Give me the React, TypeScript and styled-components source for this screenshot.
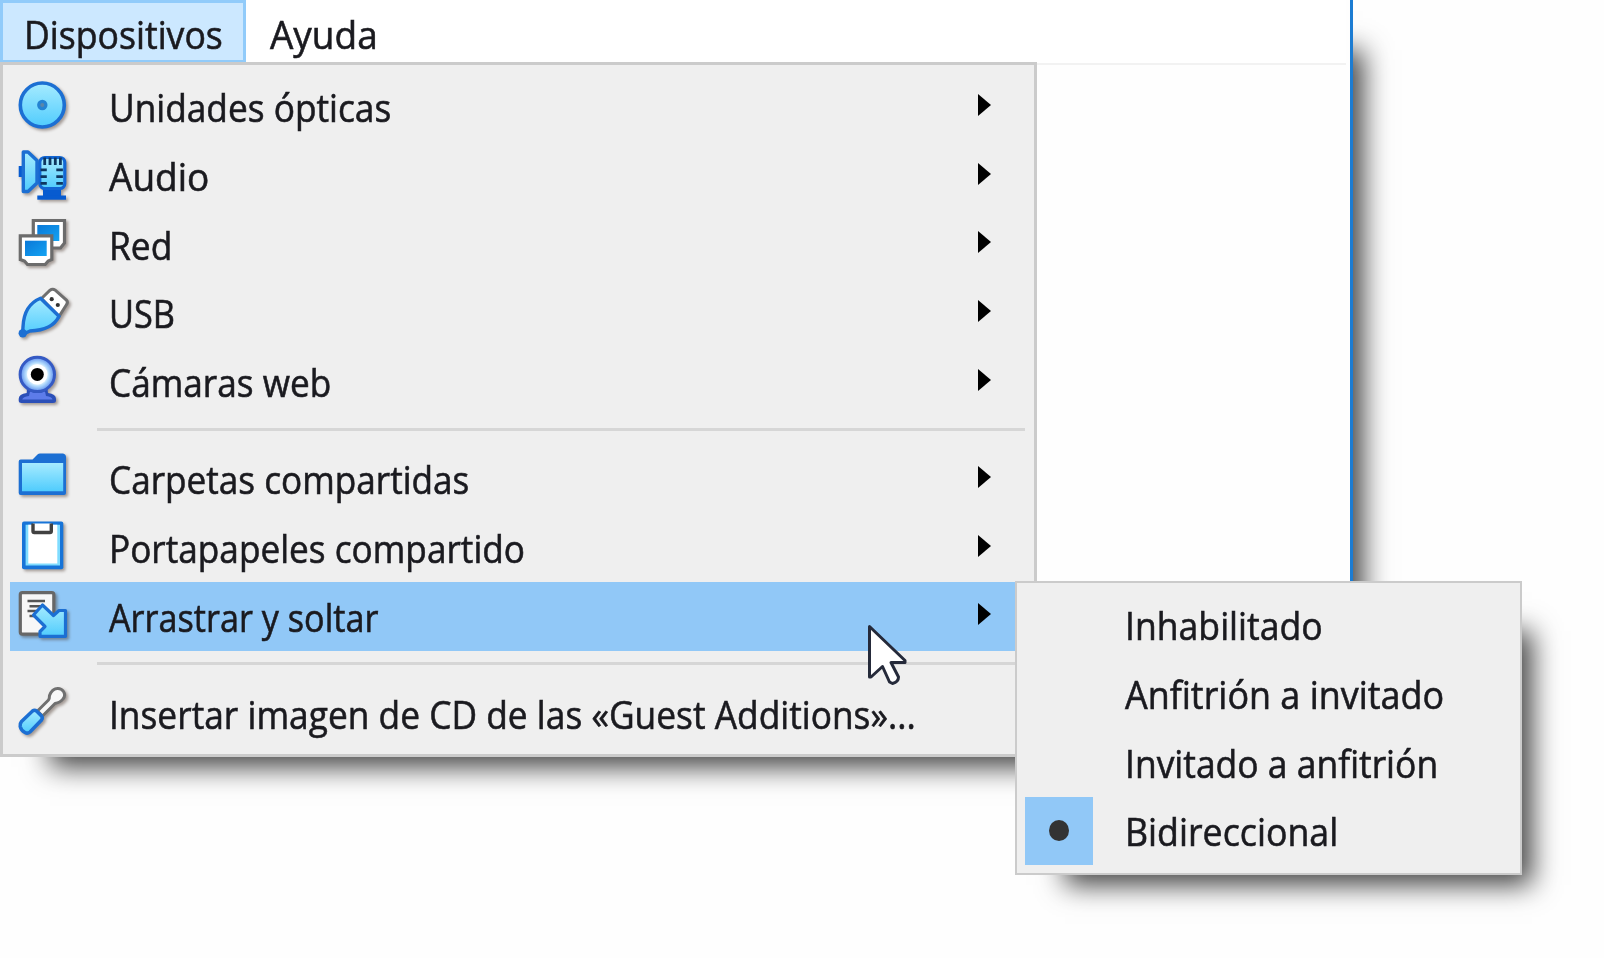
import React, { useLayoutEffect, useRef, useState } from 'react';
import styled, { createGlobalStyle, css } from 'styled-components';

const GlobalStyle = createGlobalStyle`
  *, *::before, *::after { box-sizing: border-box; }
  html, body { margin: 0; padding: 0; background: #fff; }
  body { overflow: hidden; }
`;

const dropShadow = css`
  box-shadow: 30px 30px 26px -20px rgba(0, 0, 0, 0.74);
`;

const Screen = styled.div`
  position: relative;
  width: 1604px;
  height: 958px;
  overflow: hidden;
  background: #fefefe;
  color: #1a1a1f;
  font-family: 'Open Sans', 'Noto Sans', sans-serif;
  font-size: 39px;
  line-height: 68.7px;
  -webkit-text-stroke: 0.6px #1a1a1f;
`;

const GuestWindow = styled.div`
  width: 1353px;
  height: 740px;
  background: #fefefe;
  border-right: 3.5px solid #1c7cd2;
  ${dropShadow}
  clip-path: inset(0 -70px 0 0);
`;

const MenuBar = styled.nav`
  display: flex;
  width: 1346px;
  height: 65px;
  background: #fff;
  border-bottom: 2px solid #f2f2f2;
`;

const BarItem = styled.div<{ $active?: boolean }>`
  display: flex;
  align-items: center;
  height: 63px;
  padding: 4px 20px 0 21px;
  border: 3px solid ${p => (p.$active ? '#91cbfa' : 'transparent')};
  background: ${p => (p.$active ? '#cce8ff' : 'transparent')};
`;

const Panel = styled.div`
  position: absolute;
  background: #efefef;
  border: 3px solid #cbcbcb;
  box-sizing: border-box;
`;

const DevicesMenu = styled(Panel)`
  left: 0;
  top: 62px;
  width: 1037px;
  height: 695px;
  padding: 7.6px 6px 0 6.5px;
  ${dropShadow}
  clip-path: inset(0 0 -70px 0);
`;

const DragMenu = styled(Panel)`
  left: 1015px;
  top: 581px;
  width: 507px;
  height: 294px;
  padding: 7.6px 6px 0 7.5px;
  border-width: 2.5px;
  ${dropShadow}
`;

const Row = styled.div<{ $highlighted?: boolean }>`
  display: flex;
  align-items: center;
  height: 68.7px;
  background: ${p => (p.$highlighted ? '#91c8f7' : 'transparent')};
`;

const IconCell = styled.div`
  flex: none;
  width: 99px;
  height: 100%;
  padding: 8px 0 0 8.5px;
  line-height: 0;
`;

const CheckCell = styled.div<{ $checked?: boolean }>`
  display: flex;
  flex: none;
  align-items: center;
  justify-content: center;
  width: 68.5px;
  height: 100%;
  margin-right: 31.5px;
  background: ${p => (p.$checked ? '#91c8f7' : 'transparent')};
`;

const RadioDot = styled.span`
  width: 20px;
  height: 21px;
  margin-top: -1px;
  border-radius: 50%;
  background: #333;
`;

const Text = styled.span`
  display: inline-block;
  flex: none;
  white-space: nowrap;
  transform-origin: 0 50%;
`;

const TextBox = styled.div<{ $width: number }>`
  flex: none;
  width: ${p => p.$width}px;
  padding-top: 1.5px;
`;

const Separator = styled.div`
  height: 28.6px;
  padding: 11.8px 3px 0 87.5px;

  &::before {
    content: '';
    display: block;
    height: 3px;
    background: #d6d6d6;
  }
`;

const SubmenuArrow = styled.span`
  width: 0;
  height: 0;
  margin: -4px 37.5px 0 auto;
  border-style: solid;
  border-width: 11.5px 0 11.5px 13.5px;
  border-color: transparent transparent transparent #000;
`;

const IconSvg = styled.svg`
  overflow: visible;
  filter: drop-shadow(2px 2px 1.5px rgba(70, 50, 40, 0.45));
`;

const Pointer = styled.svg`
  position: absolute;
  left: 866.5px;
  top: 623px;
`;

/* Condenses a label horizontally so that it fills its column width. */
function Label({ text, width }: { text: string; width: number }) {
  const ref = useRef<HTMLSpanElement>(null);
  const [scale, setScale] = useState(1);
  useLayoutEffect(() => {
    if (ref.current) setScale(width / ref.current.offsetWidth);
  }, [text, width]);
  return (
    <TextBox $width={width}>
      <Text ref={ref} style={{ transform: `scaleX(${scale})` }}>{text}</Text>
    </TextBox>
  );
}

function Icon({ children }: { children: React.ReactNode }) {
  return <IconSvg width="50" height="50" viewBox="0 0 50 50">{children}</IconSvg>;
}

const Gradients = () => (
  <svg width="0" height="0" style={{ position: 'absolute' }}>
    <defs>
      <linearGradient id="sky" x1="0" y1="0" x2="0" y2="1">
        <stop offset="0" stopColor="#a6ebff" />
        <stop offset="1" stopColor="#50ccfd" />
      </linearGradient>
      <linearGradient id="monitor" x1="0" y1="0" x2="1" y2="1">
        <stop offset="0" stopColor="#0a78d8" />
        <stop offset="1" stopColor="#13a3f2" />
      </linearGradient>
      <radialGradient id="lens">
        <stop offset="0.5" stopColor="#fff" />
        <stop offset="0.68" stopColor="#b4dcfc" />
        <stop offset="1" stopColor="#5b8cee" />
      </radialGradient>
    </defs>
  </svg>
);

const BLUE = '#1c6fd3';

const DiscIcon = () => (
  <Icon>
    <circle cx="24.3" cy="24" r="22" fill="url(#sky)" stroke={BLUE} strokeWidth="3.6" />
    <circle cx="24.3" cy="24" r="5.2" fill="#2583d2" />
    <circle cx="24.3" cy="24" r="2" fill="#5c86a8" />
  </Icon>
);

const AudioIcon = () => (
  <Icon>
    <path d="M0.7 17H5v11H0.7z" fill="#075bd0" />
    <path d="M5.3 3H10L19 11.5V34L10 42.5H5.3z" fill="url(#sky)" stroke={BLUE} strokeWidth="3.4" strokeLinejoin="round" />
    <path d="M25 38h18v9H25z" fill="#075bd0" />
    <path d="M19.3 46.5H48v4.2H19.3z" fill="#075bd0" />
    <rect x="21.8" y="8.5" width="25" height="31" rx="5" fill="url(#sky)" stroke="#1266d4" strokeWidth="3.2" />
    <path d="M26.7 8.5v7.5M32 8.5v7.5M37.3 8.5v7.5M42.4 8.5v7.5M22.5 20.8h6.3M22.5 27.6h6.3M22.5 34.4h6.3M38.3 20.8h6.6M38.3 27.6h6.6M38.3 34.4h6.6" stroke="#0e3660" strokeWidth="2.8" />
  </Icon>
);

const NetworkIcon = () => (
  <Icon>
    <path d="M15.3 2.5H46.5V25l-4 5H15.3z" fill="#fff" stroke="#6c6c6c" strokeWidth="3.2" />
    <path d="M19.3 7h22v16h-22z" fill="url(#monitor)" />
    <path d="M2.3 17.8H33.8V41.5l-3.6 1.5-3 3.5H9.5l-3-3.5-4.2-1.5z" fill="#fff" stroke="#6c6c6c" strokeWidth="3.2" />
    <path d="M7 22.7h21.7V38H7z" fill="url(#monitor)" />
  </Icon>
);

const UsbIcon = () => (
  <Icon>
    <path d="M23.5 11.5L32 3.2q2.7-2 5.2 0L48.4 13q2 2.2 0 4.8L41 29.5z" fill="#fff" stroke="#6f6f6f" strokeWidth="3" />
    <circle cx="33.7" cy="12.2" r="2.1" fill="#333" />
    <circle cx="39.8" cy="18" r="2.1" fill="#333" />
    <path d="M22.5 11.3L41 29.3C36 40 26 43.500 12 44L4.500 47.500 5 40C5.500 27 11 16 22.500 11.300z" fill="url(#sky)" stroke={BLUE} strokeWidth="3.4" strokeLinejoin="round" />
    <circle cx="4.8" cy="46.2" r="4.2" fill={BLUE} />
  </Icon>
);

const WebcamIcon = () => (
  <Icon>
    <path d="M9 34h20.5L30 38q8 1 8 6v1.500q0 2.500-3 2.500H3.600Q.7 48 .7 45.500V44q0-5 8-6z" fill="#2b4fb8" />
    <path d="M12 36.500q7.500 3 15 0l1 4.500q6 .5 6.500 3.500H4.200Q5 41.500 11 41z" fill="#5d7cea" />
    <circle cx="19.3" cy="19.4" r="17.2" fill="url(#lens)" stroke="#355ac4" strokeWidth="3" />
    <circle cx="19.3" cy="19.4" r="10.2" fill="#fff" />
    <circle cx="19.3" cy="19.4" r="6.5" fill="#000" />
  </Icon>
);

const FolderIcon = () => (
  <Icon>
    <path d="M.7 8.500q0-2 2-2H14.500L19.500 1.500q1-1 2.500-1H45q3 .5 3 3.500V40q0 2-2 2H2.700q-2 0-2-2z" fill={BLUE} />
    <path d="M4 10H45.200V38.300H4z" fill="url(#sky)" />
  </Icon>
);

const ClipboardIcon = () => (
  <Icon>
    <rect x="4" y=".4" width="41.3" height="47.8" rx="2" fill="#1774d8" />
    <path d="M7.600 3.700H42V44.500H7.600z" fill="#7fdcff" />
    <path d="M10.300 3.700H39.300V42.500H10.300z" fill="#fff" />
    <path d="M15 2.500V10.200q0 1.300 1.300 1.300H32q1.300 0 1.300-1.300V2.500" fill="#fff" stroke="#414141" strokeWidth="3.4" />
  </Icon>
);

const DragIcon = () => (
  <Icon>
    <rect x="2.3" y="2.6" width="33.5" height="41.5" rx="2" fill="#f7f7f7" stroke="#676767" strokeWidth="3.2" />
    <path d="M9.500 11H27M11.500 16.300H24M9.500 21H20M11.500 26H18" stroke="#555" strokeWidth="2.5" />
    <path d="M24.500 15L35.500 25.500 41 20.500H47.500V46.300H22L22 41.500 27 36.500 15.500 25z" fill="url(#sky)" stroke={BLUE} strokeWidth="3.2" strokeLinejoin="round" />
  </Icon>
);

const ToolIcon = () => (
  <Icon>
    <path d="M19.500 24L30.500 13Q31.500 11.500 31.500 8.500 34 2 39 1.500q4-.5 6.500 3 2.500 4-.5 7.500-2.500 3.500-8 4.500L24.500 29z" fill="#f8f8f8" stroke="#707070" strokeWidth="3" strokeLinejoin="round" />
    <path d="M3.500 34.500L14.500 24q2-1.500 4 0L23.500 29q1.500 2 0 4L12 45q-2.500 2-5 .5Q3 43.500 2.200 39.500 1.800 36.500 3.500 34.500z" fill="url(#sky)" stroke={BLUE} strokeWidth="3.5" />
  </Icon>
);

type Item = { text: string; width: number; icon: React.FC; submenu?: boolean; highlighted?: boolean };

const groups: Item[][] = [
  [
    { text: 'Unidades ópticas', width: 282, icon: DiscIcon, submenu: true },
    { text: 'Audio', width: 100.5, icon: AudioIcon, submenu: true },
    { text: 'Red', width: 63.5, icon: NetworkIcon, submenu: true },
    { text: 'USB', width: 66, icon: UsbIcon, submenu: true },
    { text: 'Cámaras web', width: 222, icon: WebcamIcon, submenu: true },
  ],
  [
    { text: 'Carpetas compartidas', width: 360.5, icon: FolderIcon, submenu: true },
    { text: 'Portapapeles compartido', width: 416, icon: ClipboardIcon, submenu: true },
    { text: 'Arrastrar y soltar', width: 269, icon: DragIcon, submenu: true, highlighted: true },
  ],
  [{ text: 'Insertar imagen de CD de las «Guest Additions»...', width: 807, icon: ToolIcon }],
];

const modes = [
  { text: 'Inhabilitado', width: 198 },
  { text: 'Anfitrión a invitado', width: 319.5 },
  { text: 'Invitado a anfitrión', width: 313.5 },
  { text: 'Bidireccional', width: 213.5, checked: true },
];

export default function App() {
  return (
    <Screen>
      <GlobalStyle />
      <Gradients />
      <GuestWindow>
        <MenuBar>
          <BarItem $active><Label text="Dispositivos" width={199} /></BarItem>
          <BarItem><Label text="Ayuda" width={108} /></BarItem>
        </MenuBar>
      </GuestWindow>
      <DevicesMenu>
        {groups.map((items, g) => (
          <React.Fragment key={g}>
            {g > 0 && <Separator />}
            {items.map(({ text, width, icon: Glyph, submenu, highlighted }) => (
              <Row key={text} $highlighted={highlighted}>
                <IconCell><Glyph /></IconCell>
                <Label text={text} width={width} />
                {submenu && <SubmenuArrow />}
              </Row>
            ))}
          </React.Fragment>
        ))}
      </DevicesMenu>
      <DragMenu>
        {modes.map(({ text, width, checked }) => (
          <Row key={text}>
            <CheckCell $checked={checked}>{checked && <RadioDot />}</CheckCell>
            <Label text={text} width={width} />
          </Row>
        ))}
      </DragMenu>
      <Pointer width="42" height="64" viewBox="0 0 42 64">
        <path
          d="M2.500 3.500L38 37.500V39.500H24L31.500 54Q31.500 59 25.500 60.500L22.500 59 15.500 43.500 4 54H2.500z"
          fill="#fff"
          stroke="#252a3a"
          strokeWidth="3"
          strokeLinejoin="round"
        />
      </Pointer>
    </Screen>
  );
}
